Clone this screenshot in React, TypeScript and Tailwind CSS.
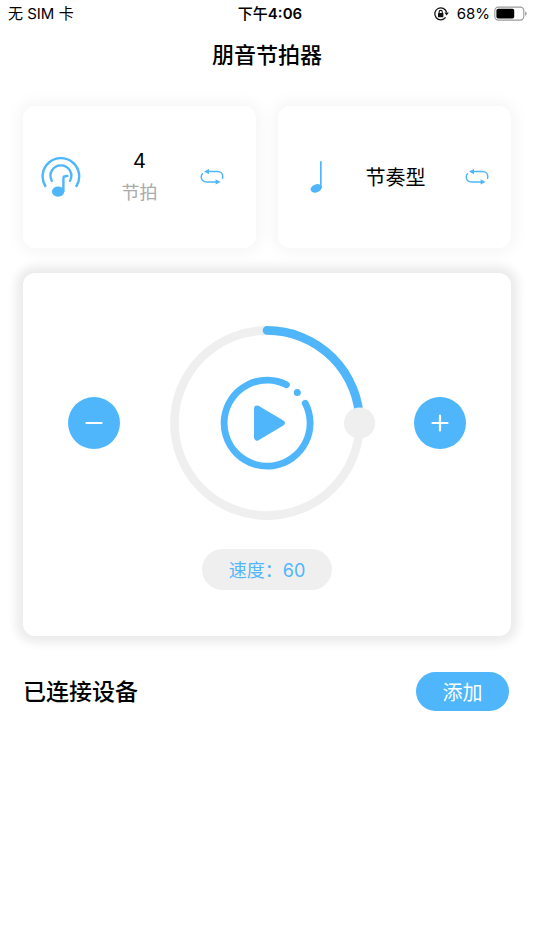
import { useState, type ReactNode } from 'react';

function RotationLockIcon() {
  return (
    <svg className="h-4 w-4" viewBox="0 0 16 16" fill="none" aria-label="Rotation lock">
      <path d="M12.6 11.4A6 6 0 1 1 13.6 6.4" stroke="#111" strokeWidth="1.3" />
      <path d="M11.4 6.6h4.4l-2.2 3z" fill="#111" />
      <rect x="5" y="7" width="5.4" height="4.2" rx="0.6" fill="#111" />
      <path d="M6.1 7.2V6a1.6 1.6 0 0 1 3.2 0v1.2" stroke="#111" strokeWidth="1.1" />
    </svg>
  );
}

function BatteryIcon() {
  return (
    <svg className="h-4 w-[34px]" viewBox="0 0 34 16" fill="none" aria-hidden="true">
      <rect x="0.8" y="1.1" width="29" height="13" rx="3.6" stroke="#999" strokeWidth="1.1" />
      <rect x="2.4" y="2.7" width="17.8" height="9.8" rx="1.8" fill="#000" />
      <path d="M31.2 5.4v4.4c1.9-.5 1.9-3.9 0-4.4z" fill="#999" />
    </svg>
  );
}

function BeatIcon() {
  return (
    <svg className="h-10 w-10 shrink-0" viewBox="0 0 40 40" fill="none" stroke="#50b6fb" strokeLinecap="round" aria-hidden="true">
      <path d="M4.3 29A18.3 18.3 0 1 1 35.5 29" strokeWidth="2.4" />
      <path d="M10.8 23.8A10.4 10.4 0 1 1 29 23.8" strokeWidth="2.4" />
      <path d="M22.4 34V21.2Q22.4 19.4 24.2 19.2L26.4 18.9" strokeWidth="2.4" />
      <ellipse cx="17.1" cy="34.6" rx="6.2" ry="5.1" fill="#50b6fb" stroke="none" />
    </svg>
  );
}

function NoteIcon() {
  return (
    <svg className="h-8 w-4 shrink-0" viewBox="0 0 16 32" fill="#50b6fb" aria-hidden="true">
      <rect x="10" y="0" width="1.7" height="27" rx="0.4" />
      <ellipse cx="6.2" cy="27.4" rx="5.8" ry="4" transform="rotate(-22 6.2 27.4)" />
    </svg>
  );
}

function SwapIcon() {
  return (
    <svg className="h-4 w-6" viewBox="0 0 24 16" fill="none" aria-hidden="true">
      <path d="M6 2.6H17.4C20.8 2.6 22.8 4.9 22.8 7.6Q22.8 8.9 22.3 9.8" stroke="#50b6fb" strokeWidth="1.5" />
      <path d="M18 12.9H6.6C3.2 12.9 1.2 10.6 1.2 8Q1.2 5.6 3 4.4" stroke="#50b6fb" strokeWidth="1.5" />
      <path d="M4 2.6L9 0V5.2z" fill="#50b6fb" />
      <path d="M20.6 12.9L15.6 10.3V15.5z" fill="#50b6fb" />
    </svg>
  );
}

function StatusBar() {
  return (
    <div className="grid h-7 grid-cols-3 items-center pl-2 pr-1.5 text-[15px]">
      <span>无 SIM 卡</span>
      <span className="pl-1 text-center font-medium">
        下午<span className="font-semibold">4:06</span>
      </span>
      <div className="flex items-center justify-end">
        <RotationLockIcon />
        <span className="ml-2 mr-1">68%</span>
        <BatteryIcon />
      </div>
    </div>
  );
}

function SettingCard({ className, children, label }: { className: string; children: ReactNode; label: string }) {
  return (
    <section
      className={`flex h-[142px] items-center justify-between rounded-xl bg-white shadow-[0_0_16px_4px_#f5f5f5] ${className}`}
    >
      {children}
      <button type="button" aria-label={label}>
        <SwapIcon />
      </button>
    </section>
  );
}

function RoundButton({ label, path, onClick }: { label: string; path: string; onClick: () => void }) {
  return (
    <button
      type="button"
      aria-label={label}
      onClick={onClick}
      className="flex h-[52px] w-[52px] items-center justify-center rounded-full bg-[#50b6fb]"
    >
      <svg className="h-5 w-5" viewBox="0 0 20 20" stroke="#fff" strokeWidth="2.2" strokeLinecap="round">
        <path d={path} />
      </svg>
    </button>
  );
}

function TempoDial({ speed, onChange }: { speed: number; onChange: (value: number) => void }) {
  // one full turn is 240 bpm, starting at twelve o'clock
  const angle = (speed / 240) * Math.PI * 2;
  const x = 110 + Math.sin(angle) * 92.6;
  const y = 110 - Math.cos(angle) * 92.6;

  return (
    <div className="grid place-items-center">
      <svg className="col-start-1 row-start-1 h-[220px] w-[220px]" viewBox="0 0 220 220" fill="none" aria-hidden="true">
        <circle cx="110" cy="110" r="92.6" stroke="#efefef" strokeWidth="8.6" />
        <path
          d={`M110 17.4A92.6 92.6 0 ${speed > 120 ? 1 : 0} 1 ${x} ${y}`}
          stroke="#50b6fb"
          strokeWidth="8.6"
          strokeLinecap="round"
        />
        <circle cx={x} cy={y} r="15.6" fill="#efefef" />
      </svg>
      <input
        type="range"
        min={1}
        max={239}
        value={speed}
        onChange={(e) => onChange(Number(e.target.value))}
        aria-label="速度"
        className="sr-only"
      />
      <button type="button" aria-label="播放" className="z-10 col-start-1 row-start-1 rounded-full">
        <svg className="h-24 w-24" viewBox="0 0 96 96" fill="none" aria-hidden="true">
          <path d="M67.4 9.7A43 43 0 1 0 86.2 28.2" stroke="#50b6fb" strokeWidth="6.8" strokeLinecap="round" />
          <circle cx="78.3" cy="17.4" r="3.5" fill="#50b6fb" />
          <path
            d="M38 33.4L62.8 48L38 62.6z"
            fill="#50b6fb"
            stroke="#50b6fb"
            strokeWidth="6"
            strokeLinejoin="round"
          />
        </svg>
      </button>
    </div>
  );
}

export default function App() {
  const [speed, setSpeed] = useState(60);

  return (
    <div className="min-h-screen bg-white font-[Inter,'Noto_Sans_CJK_SC',sans-serif] text-black">
      <StatusBar />
      <header className="flex h-[54px] items-center justify-center">
        <h1 className="text-[22px] font-medium">朋音节拍器</h1>
      </header>

      <main className="px-[23px] pt-6">
        <div className="grid grid-cols-2 gap-[22px]">
          <SettingCard className="pl-[18px] pr-8" label="切换节拍">
            <BeatIcon />
            <div className="pr-0.5 text-center">
              <p className="text-xl leading-8">4</p>
              <p className="text-lg leading-8 text-[#aaa]">节拍</p>
            </div>
          </SettingCard>
          <SettingCard className="pl-8 pr-[22px]" label="切换节奏型">
            <NoteIcon />
            <p className="pt-0.5 text-xl">节奏型</p>
          </SettingCard>
        </div>

        <section className="mt-[25px] flex flex-col items-center rounded-xl bg-white pb-[46px] pt-10 shadow-[0_0_10px_7px_#ececec]">
          <div className="flex w-full items-center justify-between px-[45px]">
            <RoundButton label="减速" path="M2.5 10h15" onClick={() => setSpeed(Math.max(1, speed - 1))} />
            <TempoDial speed={speed} onChange={setSpeed} />
            <RoundButton label="加速" path="M2.5 10h15M10 2.5v15" onClick={() => setSpeed(Math.min(239, speed + 1))} />
          </div>
          <p className="mt-4 flex h-[41px] w-[130px] items-center justify-center rounded-full bg-[#efefef] pt-0.5 text-lg text-[#50b6fb]">
            速度：{speed}
          </p>
        </section>

        <div className="mt-9 flex items-center justify-between pr-0.5">
          <h2 className="pt-0.5 text-[23px] font-medium">已连接设备</h2>
          <button type="button" className="h-[39px] w-[93px] rounded-full bg-[#50b6fb] pt-0.5 text-xl text-white">
            添加
          </button>
        </div>
      </main>
    </div>
  );
}
